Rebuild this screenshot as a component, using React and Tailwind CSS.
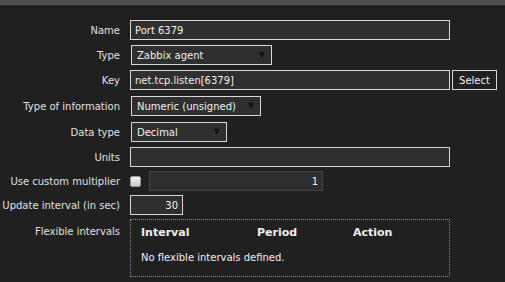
import React from 'react';

const font = { fontFamily: '"DejaVu Sans", Verdana, sans-serif' };

const Row = ({ label, children, className = '' }) => (
	<div className={`flex items-center ${className}`}>
		<div className="w-[121px] shrink-0 text-right pr-[1px] text-[10px] text-[#e0e0e0] whitespace-nowrap">{label}</div>
		<div className="ml-[9px] flex items-center">{children}</div>
	</div>
);

const Select = ({ value, width }) => (
	<div className={`h-[20px] ${width} border border-[#d8d8d8] bg-[#2f2f2f] flex items-center justify-between pl-[5px] pr-[6px] text-[10px] text-[#f0f0f0] ml-[1px]`}>
		<span>{value}</span>
		<span className="text-[8px] text-[#111]">▼</span>
	</div>
);

const Input = ({ value, width, right = false, dim = false }) => (
	<div
		className={`h-[20px] ${width} border ${dim ? 'border-[#444]' : 'border-[#d8d8d8]'} bg-[#2f2f2f] flex items-center px-[4px] text-[10px] text-[#f0f0f0] ${right ? 'justify-end' : ''}`}
	>
		{value}
	</div>
);

export default function App() {
	return (
		<div className="w-[505px] h-[282px] bg-[#202020] overflow-hidden" style={font}>
			<div className="h-[5px] bg-[#4f4f4f]" />
			<div className="h-[1px] bg-[#2a2a2a]" />
			<div className="pt-[14px] flex flex-col">
				<Row label="Name">
					<Input value="Port 6379" width="w-[320px]" />
				</Row>
				<Row label="Type" className="mt-[5px]">
					<Select value="Zabbix agent" width="w-[141px]" />
				</Row>
				<Row label="Key" className="mt-[5px]">
					<Input value="net.tcp.listen[6379]" width="w-[320px]" />
					<div className="ml-[2px] h-[20px] w-[45px] border border-[#d8d8d8] flex items-center justify-center text-[10px] text-[#f0f0f0]">
						Select
					</div>
				</Row>
				<Row label="Type of information" className="mt-[6px]">
					<Select value="Numeric (unsigned)" width="w-[130px]" />
				</Row>
				<Row label="Data type" className="mt-[6px]">
					<Select value="Decimal" width="w-[96px]" />
				</Row>
				<Row label="Units" className="mt-[5px]">
					<Input value="" width="w-[320px]" />
				</Row>
				<Row label="Use custom multiplier" className="mt-[4px]">
					<div className="w-[11px] h-[11px] rounded-[2px] bg-gradient-to-b from-[#f4f4f4] to-[#c8c8c8] border border-[#999]" />
					<div className="ml-[8px]">
						<Input value="1" width="w-[174px]" right dim />
					</div>
				</Row>
				<Row label="Update interval (in sec)" className="mt-[4px]">
					<Input value="30" width="w-[53px]" right />
				</Row>
				<div className="flex mt-[4px]">
					<div className="w-[121px] shrink-0 text-right pr-[1px] text-[10px] text-[#e0e0e0] pt-[5px]">Flexible intervals</div>
					<div className="ml-[9px] w-[320px] h-[58px] border border-dotted border-[#8a8a8a] px-[10px] text-[10px] text-[#f0f0f0]">
						<div className="flex font-bold text-[11px] mt-[5px]">
							<span className="w-[116px]">Interval</span>
							<span className="w-[96px]">Period</span>
							<span>Action</span>
						</div>
						<div className="mt-[8px]">No flexible intervals defined.</div>
					</div>
				</div>
			</div>
		</div>
	);
}
